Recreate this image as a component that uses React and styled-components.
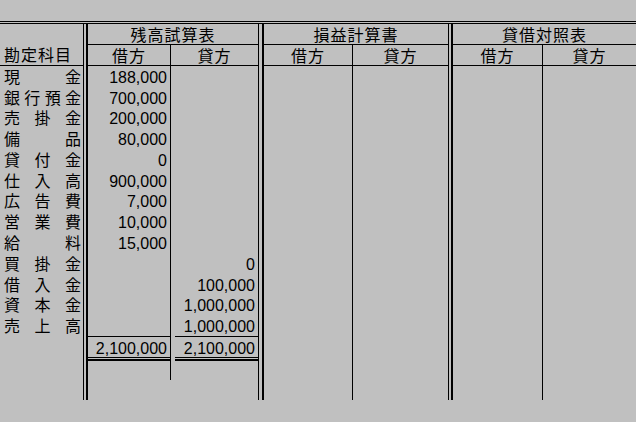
import styled, { createGlobalStyle } from 'styled-components';

const GlobalStyle = createGlobalStyle`
  html, body {
    margin: 0;
    padding: 0;
    background: #c0c0c0;
  }
  body {
    font-family: "Liberation Sans", "Noto Sans CJK JP", sans-serif;
    font-size: 16px;
    line-height: 20px;
    color: #000;
  }
`;

const Page = styled.div`
  width: 636px;
  height: 422px;
  padding-top: 21px;
  box-sizing: border-box;
  overflow: hidden;
`;

const Sheet = styled.div`
  display: flex;
  height: 379px;
  box-sizing: border-box;
  border-top: 3px double #000;
`;

const DoubleRule = styled.div`
  flex: none;
  box-sizing: border-box;
  width: ${(props) => props.gap + 3}px;
  border-left: 1px solid #000;
  border-right: 2px solid #000;
`;

const LabelColumn = styled.div`
  flex: none;
  width: 83px;
  display: flex;
  flex-direction: column;
`;

const LabelHeader = styled.div`
  height: 41px;
  border-bottom: 1px solid #000;
  display: flex;
  align-items: flex-end;
  padding-left: 4px;
  letter-spacing: 1px;
  line-height: 18px;
`;

const Rows = styled.div`
  height: 270px;
  display: flex;
  flex-direction: column;
`;

const Label = styled.div`
  flex: 1;
  min-height: 0;
  display: flex;
  align-items: center;
  justify-content: space-between;
  padding: 3px 2px 0 4px;
`;

const Group = styled.div`
  flex: none;
  width: ${(props) => props.width}px;
  display: flex;
  flex-direction: column;
`;

const GroupTitle = styled.div`
  height: 18px;
  padding-top: 2px;
  border-bottom: 1px solid #000;
  text-align: center;
  letter-spacing: 1px;
`;

const Columns = styled.div`
  flex: 1;
  display: flex;
  align-items: ${(props) => (props.short ? 'flex-start' : 'stretch')};
`;

const Column = styled.div`
  flex: none;
  width: ${(props) => props.width}px;
  height: ${(props) => (props.height ? `${props.height}px` : 'auto')};
  box-sizing: border-box;
  border-right: ${(props) => (props.divider ? '1px solid #000' : 'none')};
  display: flex;
  flex-direction: column;
`;

const SideHeader = styled.div`
  height: 18px;
  padding-top: 2px;
  border-bottom: 1px solid #000;
  text-align: center;
  letter-spacing: 1px;
`;

const Amount = styled.div`
  flex: 1;
  min-height: 0;
  display: flex;
  align-items: center;
  justify-content: flex-end;
  padding: 3px 3px 0 0;
`;

const Total = styled.div`
  height: 18px;
  padding: 2px 3px 0 0;
  margin-left: ${(props) => props.inset}px;
  border-top: 1px solid #000;
  border-bottom: 1px solid #000;
  box-shadow: 0 1px 0 #c0c0c0, 0 3px 0 #000;
  text-align: right;
`;

const accounts = [
  { name: '現金', debit: '188,000', credit: '' },
  { name: '銀行預金', debit: '700,000', credit: '' },
  { name: '売掛金', debit: '200,000', credit: '' },
  { name: '備品', debit: '80,000', credit: '' },
  { name: '貸付金', debit: '0', credit: '' },
  { name: '仕入高', debit: '900,000', credit: '' },
  { name: '広告費', debit: '7,000', credit: '' },
  { name: '営業費', debit: '10,000', credit: '' },
  { name: '給料', debit: '15,000', credit: '' },
  { name: '買掛金', debit: '', credit: '0' },
  { name: '借入金', debit: '', credit: '100,000' },
  { name: '資本金', debit: '', credit: '1,000,000' },
  { name: '売上高', debit: '', credit: '1,000,000' },
];

const EmptyGroup = ({ title, width, left, right }) => (
  <Group width={width}>
    <GroupTitle>{title}</GroupTitle>
    <Columns>
      <Column width={left} divider>
        <SideHeader>借方</SideHeader>
      </Column>
      <Column width={right}>
        <SideHeader>貸方</SideHeader>
      </Column>
    </Columns>
  </Group>
);

const App = () => (
  <Page>
    <GlobalStyle />
    <Sheet>
      <LabelColumn>
        <LabelHeader>勘定科目</LabelHeader>
        <Rows>
          {accounts.map((a) => (
            <Label key={a.name}>
              {[...a.name].map((ch, i) => (
                <span key={i}>{ch}</span>
              ))}
            </Label>
          ))}
        </Rows>
      </LabelColumn>
      <DoubleRule gap={2} />
      <Group width={170}>
        <GroupTitle>残高試算表</GroupTitle>
        <Columns short>
          <Column width={83} height={335} divider>
            <SideHeader>借方</SideHeader>
            <Rows>
              {accounts.map((a) => (
                <Amount key={a.name}>{a.debit}</Amount>
              ))}
            </Rows>
            <Total inset={0}>2,100,000</Total>
          </Column>
          <Column width={87}>
            <SideHeader>貸方</SideHeader>
            <Rows>
              {accounts.map((a) => (
                <Amount key={a.name}>{a.credit}</Amount>
              ))}
            </Rows>
            <Total inset={4}>2,100,000</Total>
          </Column>
        </Columns>
      </Group>
      <DoubleRule gap={3} />
      <EmptyGroup title="損益計算書" width={184} left={89} right={95} />
      <DoubleRule gap={2} />
      <EmptyGroup title="貸借対照表" width={183} left={90} right={93} />
    </Sheet>
  </Page>
);

export default App;
